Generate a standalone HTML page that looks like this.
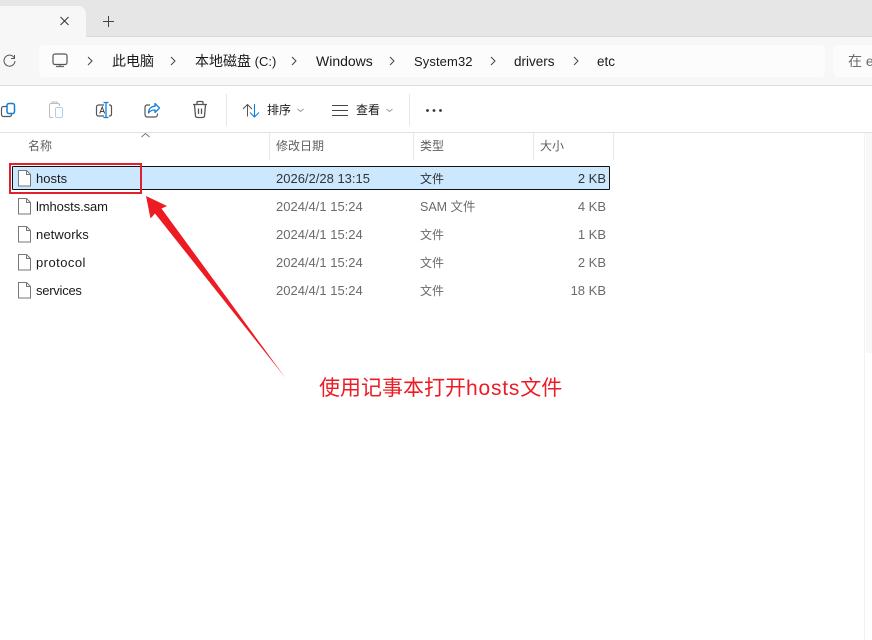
<!DOCTYPE html>
<html><head><meta charset="utf-8">
<style>
html,body{margin:0;padding:0;background:#fff}
body{width:872px;height:640px;position:relative;overflow:hidden;font-family:"Liberation Sans","Noto Sans CJK SC",sans-serif;font-size:13px;color:#1a1a1a}
.a{position:absolute;white-space:nowrap;line-height:18px}
svg{position:absolute;overflow:visible}
.g{color:#6b6b6b}
.h{color:#5f5f5f;font-size:12px}
.b{font-size:14px}
</style></head><body>
<div class="a" style="left:0;top:0;width:872px;height:36px;background:#e6e6e6"></div>
<div class="a" style="left:0;top:36px;width:872px;height:49px;background:#f7f7f7;border-top:1px solid #d9d9d9;box-sizing:border-box"></div>
<div class="a" style="left:0;top:6px;width:86px;height:31px;background:#f7f7f7;border-top-right-radius:8px"></div>
<div class="a" style="left:0;top:85px;width:872px;height:1px;background:#dcdcdc"></div>
<div class="a" style="left:39px;top:45px;width:786px;height:32px;background:#fcfcfc;border-radius:5px"></div>
<div class="a" style="left:833px;top:45px;width:39px;height:32px;background:#fcfcfc;border-radius:5px 0 0 5px"></div>
<div class="a" style="left:0;top:132px;width:872px;height:1px;background:#e2e2e2"></div>

<svg style="left:0;top:0" width="872" height="640" fill="none">
<path d="M60.500 17l8 8M68.500 17l-8 8" stroke="#333" stroke-width="1"/>
<path d="M108.500 16v11M103 21.500h11" stroke="#444" stroke-width="1"/>
<path d="M14 57.500a5.500 5.500 0 1 0 1 3.500M14.500 55v3.500H11" stroke="#555" stroke-width="1"/>
<rect x="53" y="54" width="14" height="10.500" rx="2" stroke="#555" stroke-width="1.200"/>
<path d="M56 66.500h8M60 65v1.500" stroke="#666" stroke-width="1.200"/>
<path d="M88 57l4 4-4 4M171 57l4 4-4 4M292 57l4 4-4 4M390 57l4 4-4 4M491 57l4 4-4 4M574 57l4 4-4 4" stroke="#444" stroke-width="1"/>

<!-- copy -->
<path d="M6.500 106.500H3.500a2 2 0 0 0-2 2v6a2 2 0 0 0 2 2h6a2 2 0 0 0 2-2v-.5" stroke="#555" stroke-width="1.200"/>
<rect x="7" y="103.500" width="7.500" height="10" rx="2" stroke="#0f7fdc" stroke-width="1.500"/>
<!-- paste -->
<path d="M53 117.500h-2a1.500 1.500 0 0 1-1.500-1.500v-11a1.500 1.500 0 0 1 1.500-1.500h7a1.500 1.500 0 0 1 1.500 1.500v1M52 103.500v-1.500h5v1.500" stroke="#bcbcbc" stroke-width="1"/>
<rect x="55.500" y="107.500" width="7" height="10" rx="1.500" stroke="#a9d0f1" stroke-width="1"/>
<!-- rename -->
<path d="M104 105h-5.500a2 2 0 0 0-2 2v7a2 2 0 0 0 2 2h5.500M109 105h1a2 2 0 0 1 1.500 2v7a2 2 0 0 1-1.500 2h-1" stroke="#555" stroke-width="1.200"/>
<path d="M99.700 113.500l2.500-6.500 2.500 6.500M100.700 111.500h3" stroke="#444" stroke-width="1"/>
<path d="M103.500 102.500h5M106 102.500v15M103.500 117.500h5" stroke="#0f7fdc" stroke-width="1.300"/>
<!-- share -->
<path d="M150 105h-3a2.500 2.500 0 0 0-2 2.500v7a2.500 2.500 0 0 0 2 2.500h8a2.500 2.500 0 0 0 2.500-2.500v-1" stroke="#555" stroke-width="1.200"/>
<path d="M155 103.500l4.500 4.500-4.500 4.500v-2.500c-3 0-5 .800-6.500 3 0-4 2.500-6.500 6.500-6.800z" stroke="#0f7fdc" stroke-width="1.300" stroke-linejoin="round"/>
<!-- delete -->
<path d="M193 104.500h14M197 104v-1.500a1 1 0 0 1 1-1h4a1 1 0 0 1 1 1v1.500M194.500 105l1 11a2 2 0 0 0 2 1.500h5a2 2 0 0 0 2-1.500l1-11M198.500 108.500v5.500M201.500 108.500v5.500" stroke="#555" stroke-width="1.300"/>
<!-- separators -->
<path d="M226.500 94v32" stroke="#e6e6e6"/>
<path d="M409.500 94v32" stroke="#e6e6e6"/>
<!-- sort -->
<path d="M247.500 116.500V105M243 109l4.500-4.500 4.500 4.500" stroke="#555" stroke-width="1"/>
<path d="M254.500 104V116.500M250 112.500l4.500 4.500 4.500-4.500" stroke="#0f7fdc" stroke-width="1.100"/>
<path d="M297.500 109l3 2.500 3-2.500M386.500 109l3 2.500 3-2.500" stroke="#999" stroke-width="1"/>
<!-- view -->
<path d="M332 105.500h16M332 110.500h16M332 115.500h16" stroke="#444" stroke-width="1"/>
<!-- more -->
<circle cx="427.500" cy="110.500" r="1.400" fill="#333"/><circle cx="434" cy="110.500" r="1.400" fill="#333"/><circle cx="440.500" cy="110.500" r="1.400" fill="#333"/>
<!-- sort caret -->
<path d="M141.500 137l4-3.500 4 3.500" stroke="#777" stroke-width="1"/>
<!-- header separators -->
<path d="M269.500 133v27M413.500 133v27M533.500 133v27M613.500 133v27" stroke="#e8e8e8"/>
<!-- scrollbar -->
<path d="M864.500 133V640" stroke="#f2f2f2"/>
<rect x="866" y="133" width="6" height="220" fill="#f8f8f8"/>
</svg>

<div class="a b" style="left:112px;top:52px">此电脑</div>
<div class="a b" style="left:195px;top:52px">本地磁盘<span style="font-size:13px"> (C:)</span></div>
<div class="a b" style="left:316px;top:52px">Windows</div>
<div class="a" style="left:414px;top:53px;letter-spacing:.1px">System32</div>
<div class="a" style="left:514px;top:53px;font-size:13.500px">drivers</div>
<div class="a" style="left:597px;top:53px;font-size:13.500px">etc</div>
<div class="a b" style="left:848px;top:52px;color:#6b6b6b">在 e</div>
<div class="a" style="left:267px;top:101px;font-size:12px">排序</div>
<div class="a" style="left:356px;top:101px;font-size:12px">查看</div>

<div class="a h" style="left:28px;top:137px">名称</div>
<div class="a h" style="left:276px;top:137px">修改日期</div>
<div class="a h" style="left:420px;top:137px">类型</div>
<div class="a h" style="left:540px;top:137px">大小</div>

<div class="a" style="left:12px;top:166px;width:598px;height:24px;box-sizing:border-box;background:#cce8ff;border:1px solid #111;border-radius:1px"></div>

<svg style="left:0;top:0" width="40" height="310" fill="none">
<g stroke="#777" stroke-width="1" fill="#fff">
<path d="M18.500 170.500h8l4 4v11.500h-12z"/><path d="M26.500 170.500v4h4" fill="none"/>
<path d="M18.500 198.500h8l4 4v11.500h-12z"/><path d="M26.500 198.500v4h4" fill="none"/>
<path d="M18.500 226.500h8l4 4v11.500h-12z"/><path d="M26.500 226.500v4h4" fill="none"/>
<path d="M18.500 254.500h8l4 4v11.500h-12z"/><path d="M26.500 254.500v4h4" fill="none"/>
<path d="M18.500 282.500h8l4 4v11.500h-12z"/><path d="M26.500 282.500v4h4" fill="none"/>
</g></svg>

<div class="a" style="left:36px;top:170px">hosts</div>
<div class="a" style="left:36px;top:198px;letter-spacing:-.1px">lmhosts.sam</div>
<div class="a" style="left:36px;top:226px;letter-spacing:.1px">networks</div>
<div class="a" style="left:36px;top:254px;letter-spacing:.45px">protocol</div>
<div class="a" style="left:36px;top:282px;letter-spacing:-.25px">services</div>

<div class="a" style="left:276px;top:170px;color:#333">2026/2/28 13:15</div>
<div class="a g" style="left:276px;top:198px">2024/4/1 15:24</div>
<div class="a g" style="left:276px;top:226px">2024/4/1 15:24</div>
<div class="a g" style="left:276px;top:254px">2024/4/1 15:24</div>
<div class="a g" style="left:276px;top:282px">2024/4/1 15:24</div>

<div class="a" style="left:420px;top:170px;color:#333;font-size:12px">文件</div>
<div class="a g" style="left:420px;top:198px;font-size:12.500px">SAM 文件</div>
<div class="a g" style="left:420px;top:226px;font-size:12px">文件</div>
<div class="a g" style="left:420px;top:254px;font-size:12px">文件</div>
<div class="a g" style="left:420px;top:282px;font-size:12px">文件</div>

<div class="a" style="right:266px;top:170px;color:#333">2 KB</div>
<div class="a g" style="right:266px;top:198px">4 KB</div>
<div class="a g" style="right:266px;top:226px">1 KB</div>
<div class="a g" style="right:266px;top:254px">2 KB</div>
<div class="a g" style="right:266px;top:282px">18 KB</div>

<div class="a" style="left:9px;top:163px;width:133px;height:31px;box-sizing:border-box;border:2px solid #e0202a"></div>

<svg style="left:0;top:0" width="872" height="640">
<polygon points="146,196 167,206 161.500,208.500 285.500,378 155,213.500 150.500,218.500" fill="#ed1c24"/>
</svg>

<div class="a" style="left:319px;top:375px;font-size:21px;line-height:28px;color:#ed1c24">使用记事本打开<span style="letter-spacing:.8px">hosts</span>文件</div>
</body></html>
